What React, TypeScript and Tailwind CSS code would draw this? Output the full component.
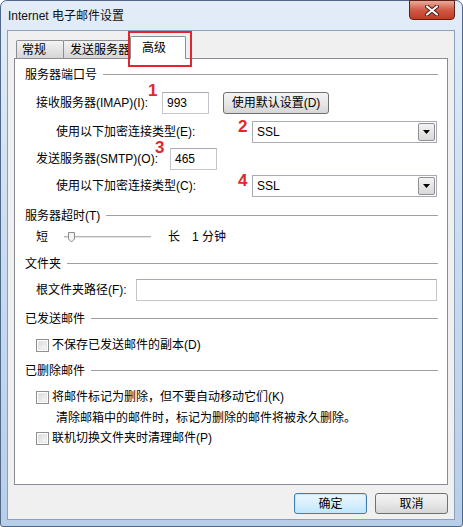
import React from "react";

const FONT = "font-['Liberation_Sans','Noto_Sans_CJK_SC',sans-serif]";

function SectionHeader({ text, mt }: { text: string; mt: string }) {
  return (
    <div className={`flex items-center h-[18px] pl-[10px] pr-[9px] ${mt}`}>
      <span className="whitespace-nowrap leading-[16px]">{text}</span>
      <div className="flex-1 ml-[6px] h-[2px] border-t border-t-[#a0a0a0] border-b border-b-white"></div>
    </div>
  );
}

function TextBox({ w, value }: { w: string; value?: string }) {
  return (
    <div className={`${w} h-[22px] border border-[#c2c6cc] border-t-[#a6abb3] bg-white flex items-center pl-[4px] leading-[16px]`}>
      {value}
    </div>
  );
}

function Select({ value }: { value: string }) {
  return (
    <div className="w-[185px] h-[22px] border border-[#a8abb1] bg-white flex items-center pl-[4px] pr-[1px] leading-[16px]">
      <span className="flex-1">{value}</span>
      <div className="w-[17px] h-[18px] border border-[#8e9095] rounded-[2px] bg-gradient-to-b from-[#f4f4f4] to-[#d8d8d8] flex items-center justify-center">
        <svg width="7" height="4" viewBox="0 0 7 4">
          <path d="M0 0 H7 L3.5 4 Z" fill="#000" />
        </svg>
      </div>
    </div>
  );
}

function CheckBox() {
  return (
    <div className="w-[13px] h-[13px] border border-[#8f8f8f] bg-white p-[1px]">
      <div className="w-full h-full bg-gradient-to-br from-[#dcdcdc] to-[#f7f7f7] border border-[#e6e6e6]"></div>
    </div>
  );
}

function RedNum({ n, cls }: { n: string; cls: string }) {
  return (
    <div className={`absolute ${cls} text-[17px] leading-none font-bold text-[#e3262b] font-['Liberation_Sans',sans-serif]`}>
      {n}
    </div>
  );
}

export default function App() {
  return (
    <div className={`w-[463px] h-[527px] bg-white ${FONT} text-[12px] text-[#000]`}>
      <div className="relative w-[463px] h-[527px] rounded-t-[7px] rounded-b-[3px] border border-[#4f6889] bg-gradient-to-b from-[#e3edf8] via-[#c9dbef] to-[#b8cee8] flex flex-col">
        {/* title bar */}
        <div className="h-[29px] flex items-center pl-[7px] leading-[16px] text-[#111]">
          Internet 电子邮件设置
        </div>
        {/* close button */}
        <div className="absolute left-[408px] top-[-1px] w-[46px] h-[20px] rounded-b-[4px] border border-[#5b2117] bg-gradient-to-b from-[#e9a99a] via-[#cf5a44] to-[#c23a22] flex items-center justify-center">
          <svg width="14" height="11" viewBox="0 0 14 11">
            <path d="M2 1.5 L12 9.5 M12 1.5 L2 9.5" stroke="#4a1a12" strokeWidth="4" strokeLinecap="round" />
            <path d="M2 1.5 L12 9.5 M12 1.5 L2 9.5" stroke="#ffffff" strokeWidth="2.2" strokeLinecap="round" />
          </svg>
        </div>

        {/* client area */}
        <div className="ml-[6px] w-[448px] h-[490px] border border-[#8aa1bd] bg-[#f0f0f0] flex flex-col">
          {/* tabs */}
          <div className="mt-[5px] ml-[6px] h-[22px] flex items-end pl-[2px]">
            <div className="w-[48px] h-[18px] border border-b-0 border-[#8c8e94] rounded-t-[2px] bg-gradient-to-b from-[#f3f3f3] to-[#d6d6d6] pl-[5px] flex items-center leading-[16px]">
              常规
            </div>
            <div className="-ml-[1px] w-[70px] h-[18px] border border-b-0 border-[#8c8e94] rounded-t-[2px] bg-gradient-to-b from-[#f3f3f3] to-[#d6d6d6] pl-[6px] flex items-center leading-[16px] whitespace-nowrap overflow-hidden">
              发送服务器
            </div>
            <div className="relative z-10 -ml-[3px] -mb-[1px] w-[56px] h-[23px] border border-b-0 border-[#8c8e94] rounded-t-[2px] bg-white pl-[11px] flex items-center leading-[16px] pb-[1px]">
              高级
            </div>
          </div>

          {/* panel */}
          <div className="relative ml-[6px] w-[434px] h-[427px] border border-[#898c95] bg-white flex flex-col">
            <SectionHeader text="服务器端口号" mt="mt-[7px]" />

            <div className="mt-[8px] h-[22px] flex items-center pl-[21px]">
              <span className="w-[126px] leading-[16px] whitespace-nowrap">接收服务器(IMAP)(I):</span>
              <TextBox w="w-[47px]" value="993" />
              <div className="ml-[14px] w-[106px] h-[22px] rounded-[3px] border border-[#707070] bg-gradient-to-b from-[#f3f3f3] via-[#e8e8e8] to-[#d6d6d6] flex items-center justify-center leading-[16px] whitespace-nowrap">
                使用默认设置(D)
              </div>
            </div>

            <div className="mt-[7px] h-[22px] flex items-center pl-[41px]">
              <span className="w-[196px] leading-[16px] whitespace-nowrap">使用以下加密连接类型(E):</span>
              <Select value="SSL" />
            </div>

            <div className="mt-[5px] h-[22px] flex items-center pl-[21px]">
              <span className="w-[134px] leading-[16px] whitespace-nowrap">发送服务器(SMTP)(O):</span>
              <TextBox w="w-[47px]" value="465" />
            </div>

            <div className="mt-[5px] h-[22px] flex items-center pl-[41px]">
              <span className="w-[196px] leading-[16px] whitespace-nowrap">使用以下加密连接类型(C):</span>
              <Select value="SSL" />
            </div>

            <SectionHeader text="服务器超时(T)" mt="mt-[10px]" />

            <div className="mt-[3px] h-[18px] flex items-center pl-[21px]">
              <span className="w-[28px] leading-[16px]">短</span>
              <svg width="88" height="14" viewBox="0 0 88 14">
                <line x1="0" y1="6.5" x2="87" y2="6.5" stroke="#b4b4b4" strokeWidth="1" />
                <line x1="0" y1="7.5" x2="87" y2="7.5" stroke="#e4e4e4" strokeWidth="1" />
                <path d="M4.5 2.5 H10.5 V9 L7.5 12 L4.5 9 Z" fill="#f4f4f4" stroke="#8c8c8c" strokeWidth="1" />
              </svg>
              <span className="ml-[16px] w-[24px] leading-[16px]">长</span>
              <span className="leading-[16px] whitespace-nowrap">1 分钟</span>
            </div>

            <SectionHeader text="文件夹" mt="mt-[9px]" />

            <div className="mt-[6px] h-[22px] flex items-center pl-[21px]">
              <span className="w-[100px] leading-[16px] whitespace-nowrap">根文件夹路径(F):</span>
              <TextBox w="w-[301px]" />
            </div>

            <SectionHeader text="已发送邮件" mt="mt-[9px]" />

            <div className="mt-[8px] h-[18px] flex items-center pl-[21px]">
              <CheckBox />
              <span className="ml-[3px] leading-[16px] whitespace-nowrap">不保存已发送邮件的副本(D)</span>
            </div>

            <SectionHeader text="已删除邮件" mt="mt-[8px]" />

            <div className="mt-[8px] h-[18px] flex items-center pl-[21px]">
              <CheckBox />
              <span className="ml-[3px] leading-[16px] whitespace-nowrap">将邮件标记为删除，但不要自动移动它们(K)</span>
            </div>

            <div className="mt-[3px] h-[18px] flex items-center pl-[41px]">
              <span className="leading-[16px] whitespace-nowrap">清除邮箱中的邮件时，标记为删除的邮件将被永久删除。</span>
            </div>

            <div className="mt-[2px] h-[18px] flex items-center pl-[21px]">
              <CheckBox />
              <span className="ml-[3px] leading-[16px] whitespace-nowrap">联机切换文件夹时清理邮件(P)</span>
            </div>

            <RedNum n="1" cls="left-[133px] top-[23px]" />
            <RedNum n="2" cls="left-[223px] top-[59px]" />
            <RedNum n="3" cls="left-[140px] top-[80px]" />
            <RedNum n="4" cls="left-[223px] top-[113px]" />
          </div>

          {/* buttons */}
          <div className="mt-[8px] ml-[6px] w-[434px] flex justify-end gap-[8px]">
            <div className="w-[73px] h-[21px] rounded-[3px] border border-[#3c7fb1] bg-gradient-to-b from-[#eaf6fd] via-[#d9f0fc] to-[#bee6fd] flex items-center justify-center leading-[16px] shadow-[inset_0_0_0_1px_#c7e7f9]">
              确定
            </div>
            <div className="w-[73px] h-[21px] rounded-[3px] border border-[#707070] bg-gradient-to-b from-[#f3f3f3] via-[#e8e8e8] to-[#d6d6d6] flex items-center justify-center leading-[16px]">
              取消
            </div>
          </div>
        </div>

        {/* red highlight box around the selected tab */}
        <div className="absolute left-[127px] top-[30px] w-[64px] h-[36px] border-2 border-[#e3262b] z-20"></div>
      </div>
    </div>
  );
}
